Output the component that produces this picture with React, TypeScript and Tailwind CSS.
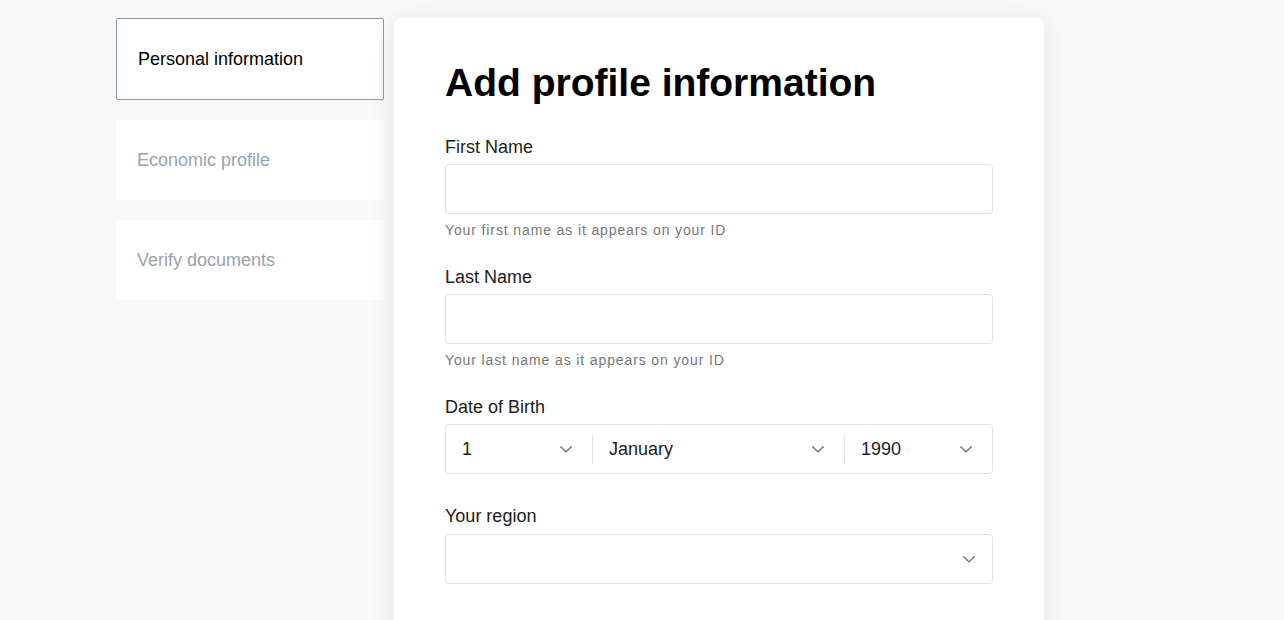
import React from "react";

type Step = { title: string; active?: boolean };

const steps: Step[] = [
  { title: "Personal information", active: true },
  { title: "Economic profile" },
  { title: "Verify documents" },
];

const Chevron = () => (
  <svg width="12" height="7" viewBox="0 0 12 7" fill="none" className="shrink-0">
    <path d="M0.75 0.75L6 5.9L11.25 0.75" stroke="#6b6b6b" strokeWidth="1.3" strokeLinecap="round" />
  </svg>
);

const TextField = ({ label, hint }: { label: string; hint: string }) => (
  <div>
    <label className="block text-[18px] leading-[24px] text-[#1c1c1c]">{label}</label>
    <input
      type="text"
      className="mt-[5px] block h-[50px] w-full rounded-[4px] border border-[#e2e2e2] bg-white px-4 text-[18px] outline-none"
    />
    <p className="mt-[6px] text-[14px] leading-[20px] tracking-[0.88px] text-[#777]">{hint}</p>
  </div>
);

const DateSegment = ({ value, className }: { value: string; className: string }) => (
  <div className={`flex items-center justify-between pl-4 pr-[20px] ${className}`}>
    <span className="text-[18px] text-[#1c1c1c]">{value}</span>
    <Chevron />
  </div>
);

export default function App() {
  return (
    <main
      className="h-[620px] overflow-hidden bg-[#f9f9f9] pt-[18px] pl-[116px]"
      style={{ fontFamily: '"Liberation Sans", Arial, sans-serif' }}
    >
      <div className="flex items-start gap-[10px]">
        <nav className="flex w-[268px] flex-col gap-[20px]">
          {steps.map((step) =>
            step.active ? (
              <div
                key={step.title}
                className="flex h-[82px] items-center rounded-[2px] border border-[#8d9aa5] bg-white px-[21px] text-[18px] text-black"
              >
                {step.title}
              </div>
            ) : (
              <div
                key={step.title}
                className="flex h-[80px] items-center bg-white px-[21px] text-[18px] text-[#97a3ae]"
              >
                {step.title}
              </div>
            )
          )}
        </nav>

        <section className="h-[640px] w-[650px] rounded-[8px] bg-white px-[51px] pt-[41px] shadow-[0_4px_28px_rgba(0,0,0,0.09)]">
          <h1 className="text-[39px] leading-[48px] font-bold text-black">Add profile information</h1>

          <div className="mt-[28px] flex flex-col gap-[25px]">
            <TextField label="First Name" hint="Your first name as it appears on your ID" />
            <TextField label="Last Name" hint="Your last name as it appears on your ID" />

            <div>
              <label className="block text-[18px] leading-[24px] text-[#1c1c1c]">Date of Birth</label>
              <div className="mt-[5px] flex h-[50px] items-center rounded-[4px] border border-[#e2e2e2]">
                <DateSegment value="1" className="w-[146px]" />
                <div className="h-[29px] w-px bg-[#e2e2e2]" />
                <DateSegment value="January" className="flex-1" />
                <div className="h-[29px] w-px bg-[#e2e2e2]" />
                <DateSegment value="1990" className="w-[147px]" />
              </div>
            </div>

            <div className="mt-[5px]">
              <label className="block text-[18px] leading-[24px] text-[#1c1c1c]">Your region</label>
              <div className="mt-[6px] flex h-[50px] items-center justify-end rounded-[4px] border border-[#e2e2e2] pr-[17px]">
                <Chevron />
              </div>
            </div>
          </div>
        </section>
      </div>
    </main>
  );
}
